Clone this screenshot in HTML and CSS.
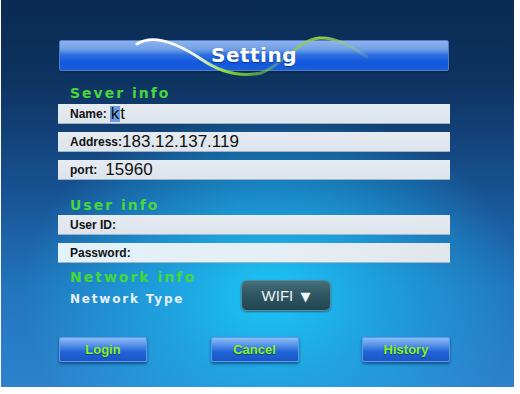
FILE: index.html
```html
<!DOCTYPE html>
<html lang="en">
<head>
    <meta charset="UTF-8">
    <meta name="viewport" content="width=device-width, initial-scale=1.0">
    <title>Setting</title>
    <link rel="stylesheet" href="styles.css">
</head>
<body>
    <div class="screen">
        <div class="title-bar">
            <svg class="title-wave" width="245" height="50" viewBox="0 0 245 50">
                <defs>
                    <linearGradient id="waveGrad" x1="0" y1="0" x2="1" y2="0">
                        <stop offset="0" stop-color="#ffffff"/>
                        <stop offset="0.25" stop-color="#eef6e0"/>
                        <stop offset="0.42" stop-color="#6fcf2e"/>
                        <stop offset="0.62" stop-color="#8fd046" stop-opacity="0.35"/>
                        <stop offset="0.8" stop-color="#8fd046"/>
                        <stop offset="1" stop-color="#a0c8a0" stop-opacity="0.2"/>
                    </linearGradient>
                </defs>
                <path d="M6,13 C20,4 40,8 70,28 C90,42 110,46 130,42 C150,36 165,10 188,7 C205,6 220,15 236,26"
                      fill="none" stroke="url(#waveGrad)" stroke-width="3" stroke-linecap="round"/>
            </svg>
            <h1>Setting</h1>
        </div>

        <div class="content">
            <h2 class="section-title first">Sever info</h2>
            <div class="field">
                <span class="field-label">Name:</span>
                <span class="field-value"><span class="selected">k</span>t</span>
            </div>
            <div class="field">
                <span class="field-label">Address:</span>
                <span class="field-value">183.12.137.119</span>
            </div>
            <div class="field field-last">
                <span class="field-label">port:</span>
                <span class="field-value port-value">15960</span>
            </div>

            <h2 class="section-title">User info</h2>
            <div class="field">
                <span class="field-label">User ID:</span>
            </div>
            <div class="field field-light">
                <span class="field-label">Password:</span>
            </div>

            <h2 class="section-title network-title">Network info</h2>
            <div class="network-row">
                <span class="network-label">Network Type</span>
                <button type="button" class="dropdown">WIFI <span class="arrow">&#9660;</span></button>
            </div>

            <div class="actions">
                <button type="button" class="btn">Login</button>
                <button type="button" class="btn">Cancel</button>
                <button type="button" class="btn">History</button>
            </div>
        </div>
    </div>
</body>
</html>
```

FILE: styles.css
```css
* {
    margin: 0;
    padding: 0;
    box-sizing: border-box;
}

body {
    background: #ffffff;
    font-family: 'Liberation Sans', Arial, sans-serif;
}

.screen {
    width: 513px;
    height: 387px;
    margin-left: 1px;
    padding-top: 40px;
    background:
        radial-gradient(ellipse 250px 190px at 270px 295px, rgba(28, 198, 246, 1) 0%, rgba(28, 180, 238, 0.65) 45%, rgba(28, 150, 220, 0) 100%),
        linear-gradient(to bottom, #0a2a52 0%, #0e3462 22%, #185394 50%, #2275bd 75%, #2e82cc 100%);
}

.title-bar {
    position: relative;
    width: 390px;
    height: 31px;
    margin-left: 58px;
    border-radius: 2px;
    border: 1px solid #4d7fd0;
    background: linear-gradient(to bottom, #8fb4ec 0%, #6f9de6 30%, #2d6fe2 48%, #1257dc 75%, #1a5fd8 100%);
    box-shadow: 0 1px 2px rgba(0, 0, 0, 0.35);
}

.title-wave {
    position: absolute;
    left: 71px;
    top: -10px;
}

.title-bar h1 {
    position: relative;
    text-align: center;
    padding-left: 0;
    font-family: 'DejaVu Sans', Verdana, sans-serif;
    font-size: 20px;
    font-weight: bold;
    line-height: 29px;
    color: #ffffff;
    letter-spacing: 0.5px;
    text-shadow: 0 1px 1px rgba(0, 40, 90, 0.6);
}

.content {
    width: 392px;
    margin-left: 57px;
}

.section-title {
    margin-top: 17px;
    margin-bottom: 2px;
    padding-left: 12px;
    font-family: 'DejaVu Sans', Verdana, sans-serif;
    font-size: 14px;
    font-weight: bold;
    line-height: 16px;
    letter-spacing: 2px;
    color: #46d83a;
}

.section-title.first {
    margin-top: 14px;
    margin-bottom: 3px;
}

.network-title {
    margin-top: 6px;
    margin-bottom: 0;
}

.field {
    display: flex;
    align-items: center;
    height: 20px;
    margin-bottom: 8px;
    padding-left: 12px;
    background: linear-gradient(to bottom, #e6ebf1 0%, #dde4ec 100%);
    border-bottom: 1px solid #9fb4c8;
    color: #111111;
}

.field-last {
    margin-bottom: 0;
}

.field-light {
    margin-bottom: 0;
    background: linear-gradient(to right, #e2f2fa 0%, #e6eef4 60%, #e0e6ec 100%);
}

.field-label {
    font-size: 12px;
    font-weight: bold;
}

.field-value {
    font-size: 17px;
    line-height: 20px;
}

.port-value {
    margin-left: 8px;
}

.selected {
    display: inline-block;
    margin-left: 3px;
    padding: 0 1px;
    background: #6b9be0;
    line-height: 16px;
}

.network-row {
    display: flex;
    align-items: center;
    margin-top: -5px;
    height: 31px;
}

.network-label {
    width: 183px;
    padding-left: 12px;
    padding-top: 6px;
    font-family: 'DejaVu Sans', Verdana, sans-serif;
    font-size: 12px;
    font-weight: bold;
    letter-spacing: 1.8px;
    color: #e8f0ff;
}

.dropdown {
    width: 90px;
    height: 31px;
    border: 1px solid #5a8a98;
    border-radius: 6px;
    background: linear-gradient(to bottom, #45707c 0%, #2f5662 45%, #214652 100%);
    box-shadow: 0 1px 2px rgba(0, 0, 0, 0.4);
    color: #eef4f6;
    font-family: 'Liberation Sans', Arial, sans-serif;
    font-size: 15px;
}

.dropdown .arrow {
    font-family: 'DejaVu Sans', sans-serif;
    font-size: 13px;
    margin-left: 3px;
}

.actions {
    display: flex;
    justify-content: space-between;
    margin-top: 26px;
    padding-left: 1px;
}

.btn {
    width: 88px;
    height: 25px;
    border: 1px solid #5f9ae6;
    border-radius: 2px;
    background: linear-gradient(to bottom, #8cbcf4 0%, #4f8ce8 35%, #2064d8 60%, #1a56c4 100%);
    box-shadow: 0 2px 3px rgba(0, 20, 60, 0.5);
    color: #8af02c;
    font-family: 'Liberation Sans', Arial, sans-serif;
    font-size: 13px;
    font-weight: bold;
    text-shadow: 0 1px 1px rgba(0, 40, 0, 0.5);
}
```
